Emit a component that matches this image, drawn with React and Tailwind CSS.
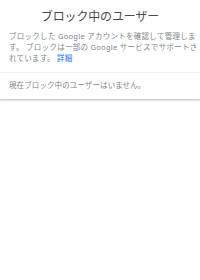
import React from "react";

const font = { fontFamily: '"Noto Sans", "Noto Sans CJK JP", sans-serif' };

export default function App() {
  return (
    <div className="w-[200px] h-[280px] bg-white" style={font}>
      {/* ヘッダー */}
      <div className="pt-[9px] pb-[8px] px-[9px] border-b border-[#f3f3f3]">
        <h1 className="text-center text-[12px] leading-[16px] text-[#4a4a4a] font-normal tracking-[-0.15px]">
          ブロック中のユーザー
        </h1>
        <p className="mt-[6px] text-[7.5px] leading-[11px] text-[#80868b] whitespace-nowrap tracking-[0.28px]">
          ブロックした Google アカウントを確認して管理しま
          <br />
          す。 ブロックは一部の Google サービスでサポートさ
          <br />
          れています。 <span className="text-[#1a73e8]">詳細</span>
        </p>
      </div>

      {/* 一覧 */}
      <div className="px-[9px] pt-[7px] pb-[8px] border-b border-[#d0d0d0] shadow-[0_1px_2px_rgba(0,0,0,0.12)]">
        <p className="text-[7.5px] leading-[11px] text-[#80868b] tracking-[0.1px]">
          現在ブロック中のユーザーはいません。
        </p>
      </div>
    </div>
  );
}
